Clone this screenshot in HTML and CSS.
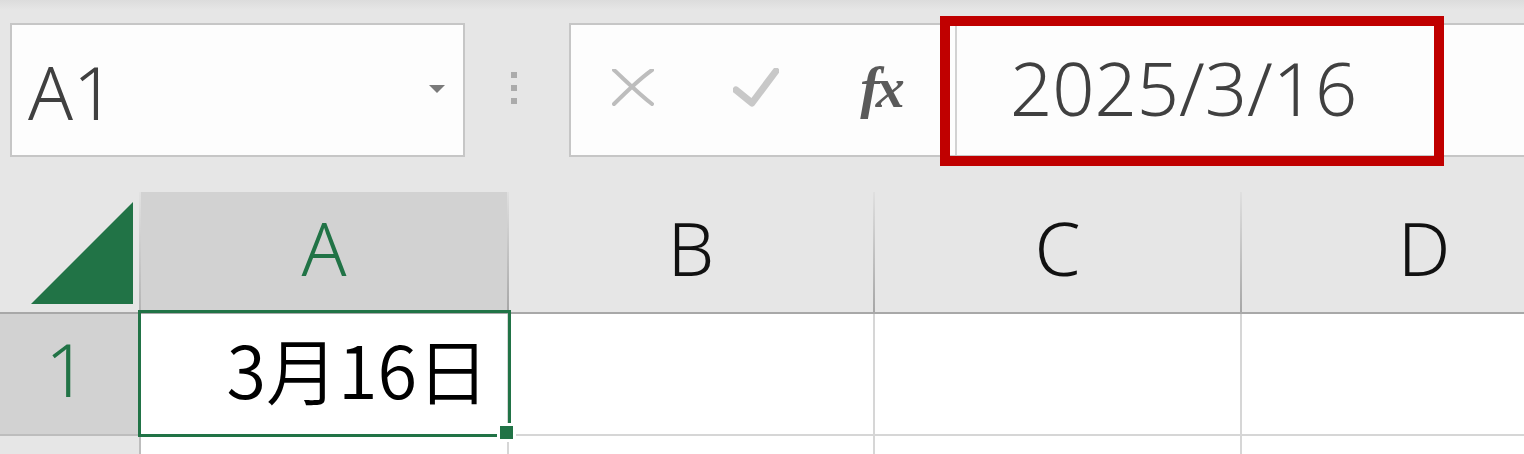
FILE: index.html
```html
<!DOCTYPE html>
<html lang="ja">
<head>
<meta charset="utf-8">
<title>Excel formula bar</title>
<link rel="stylesheet" href="styles.css">
</head>
<body>
<div class="app">
  <div class="formula-row">
    <div class="namebox">
      <span class="namebox-text">A1</span>
      <span class="namebox-arrow"></span>
    </div>
    <div class="grip">
      <span class="dot"></span><span class="dot"></span><span class="dot"></span>
    </div>
    <div class="fbar">
      <div class="fbtn">
        <svg width="42" height="38" viewBox="0 0 42 38"><path d="M2 35 C14 23 26 11 40 1" stroke="#bdbdbd" stroke-width="4" fill="none" stroke-linecap="round"/><path d="M2 1 C14 12 26 24 40 35" stroke="#bdbdbd" stroke-width="4" fill="none" stroke-linecap="round"/></svg>
      </div>
      <div class="fbtn">
        <svg width="46" height="40" viewBox="0 0 46 40"><path d="M3 22 L19 35 L43 3" stroke="#c8c8c8" stroke-width="7" fill="none" stroke-linecap="round" stroke-linejoin="round"/></svg>
      </div>
      <div class="fbtn fx">fx</div>
      <div class="finput">2025/3/16</div>
    </div>
    <div class="highlight"></div>
  </div>

  <div class="sheet">
    <div class="hrow">
      <div class="corner">
        <svg class="corner-tri" width="104" height="104" viewBox="0 0 104 104"><polygon points="0,102 102,102 102,0" fill="#217346"/></svg>
      </div>
      <div class="colh col-a sel">A</div>
      <div class="colh col-b">B</div>
      <div class="colh col-c">C</div>
      <div class="colh col-d">D</div>
    </div>
    <div class="row r1">
      <div class="rowh sel">1</div>
      <div class="cell col-a active">
        <span class="cell-text">3月16日</span>
        <div class="selection"><span class="handle"></span></div>
      </div>
      <div class="cell col-b"></div>
      <div class="cell col-c"></div>
      <div class="cell col-d"></div>
    </div>
    <div class="row r2">
      <div class="rowh"></div>
      <div class="cell col-a"></div>
      <div class="cell col-b"></div>
      <div class="cell col-c"></div>
      <div class="cell col-d"></div>
    </div>
  </div>
</div>
</body>
</html>
```

FILE: styles.css
```css
html, body {
  margin: 0;
  padding: 0;
}
body {
  width: 1524px;
  height: 454px;
  overflow: hidden;
  background: #e6e6e6;
  font-family: "Noto Sans", "Noto Sans CJK JP", sans-serif;
  font-weight: 350;
}
.app {
  width: 1524px;
  height: 454px;
  overflow: hidden;
}

/* ---------- formula row ---------- */
.formula-row {
  position: relative;
  height: 192px;
  box-sizing: border-box;
  padding-top: 23px;
  display: flex;
  align-items: flex-start;
  background: linear-gradient(#dcdcdc 0px, #e6e6e6 10px, #e6e6e6 100%);
}
.namebox {
  margin-left: 10px;
  width: 455px;
  height: 134px;
  box-sizing: border-box;
  border: 2px solid #c6c6c6;
  background: #fdfdfd;
  display: flex;
  align-items: center;
  justify-content: space-between;
  padding: 0 18px 0 16px;
}
.namebox-text {
  font-size: 74px;
  line-height: 1;
  color: #404040;
  margin-top: 4px;
}
.namebox-arrow {
  width: 0;
  height: 0;
  border-left: 8px solid transparent;
  border-right: 8px solid transparent;
  border-top: 8px solid #7a7a7a;
  margin-top: -2px;
}
.grip {
  width: 104px;
  height: 134px;
  box-sizing: border-box;
  padding-left: 46px;
  display: flex;
  flex-direction: column;
  justify-content: center;
  gap: 7px;
  margin-top: -2px;
}
.dot {
  display: block;
  width: 6px;
  height: 6px;
  background: #ababab;
}
.fbar {
  flex: 1;
  height: 134px;
  box-sizing: border-box;
  border: 2px solid #c6c6c6;
  border-right: none;
  background: #fdfdfd;
  display: flex;
  align-items: stretch;
}
.fbtn {
  width: 123px;
  flex: none;
  display: flex;
  align-items: center;
  justify-content: center;
  margin-top: -4px;
}
.fbtn.fx {
  font-family: "Liberation Serif", serif;
  font-style: italic;
  font-weight: bold;
  font-size: 58px;
  color: #5a5a5a;
  letter-spacing: -4px;
  margin-top: -6px;
  padding-left: 2px;
}
.finput {
  margin-left: 13px;
  flex: 1;
  border-left: 2px solid #d2d2d2;
  padding-left: 53px;
  display: flex;
  align-items: center;
  font-size: 74px;
  color: #404040;
  line-height: 1;
  margin-top: -4px;
}
.highlight {
  position: absolute;
  left: 940px;
  top: 16px;
  width: 504px;
  height: 150px;
  box-sizing: border-box;
  border: 10px solid #c00000;
}

/* ---------- sheet ---------- */
.sheet {
  background: #ffffff;
}
.hrow {
  display: flex;
  height: 122px;
  box-sizing: border-box;
  border-bottom: 2px solid #a8a8a8;
  background: #e6e6e6;
}
.corner {
  width: 141px;
  flex: none;
  box-sizing: border-box;
  border-right: 2px solid;
  border-image: linear-gradient(#e2e2e2, #b4b4b4) 1;
  display: flex;
  align-items: flex-end;
  justify-content: flex-end;
  padding: 0 4px 6px 0;
}
.corner-tri {
  display: block;
}
.colh {
  flex: none;
  box-sizing: border-box;
  border-right: 2px solid;
  border-image: linear-gradient(#e0e0e0, #a6a6a6) 1;
  display: flex;
  align-items: center;
  justify-content: center;
  font-size: 74px;
  line-height: 1;
  color: #111;
  padding-bottom: 8px;
}
.colh.sel {
  background: #d2d2d2;
  color: #217346;
}
.col-a { width: 368px; }
.col-b { width: 366px; }
.col-c { width: 367px; }
.col-d { width: 366px; }

.row {
  display: flex;
  box-sizing: border-box;
}
.r1 { height: 122px; }
.r2 { height: 40px; }
.rowh {
  width: 141px;
  flex: none;
  box-sizing: border-box;
  border-right: 2px solid #bdbdbd;
  border-bottom: 2px solid #bdbdbd;
  background: #e6e6e6;
  display: flex;
  align-items: center;
  justify-content: center;
  font-size: 74px;
  line-height: 1;
  color: #111;
  padding-right: 6px;
  padding-bottom: 10px;
}
.rowh.sel {
  background: #d2d2d2;
  color: #217346;
}
.cell {
  flex: none;
  box-sizing: border-box;
  border-right: 2px solid #d6d6d6;
  border-bottom: 2px solid #d6d6d6;
  background: #ffffff;
}
.cell.active {
  position: relative;
  display: flex;
  align-items: center;
  justify-content: flex-end;
  padding-right: 18px;
}
.cell-text {
  font-family: "Noto Sans CJK JP", sans-serif;
  font-weight: 350;
  font-size: 72px;
  line-height: 1;
  color: #000;
  margin-top: -12px;
}
.selection {
  position: absolute;
  left: -3px;
  top: -4px;
  right: -4px;
  bottom: -3px;
  border: 3px solid #217346;
  pointer-events: none;
}
.handle {
  position: absolute;
  right: -8px;
  bottom: -8px;
  width: 13px;
  height: 13px;
  background: #217346;
  border: 3px solid #ffffff;
}
```
